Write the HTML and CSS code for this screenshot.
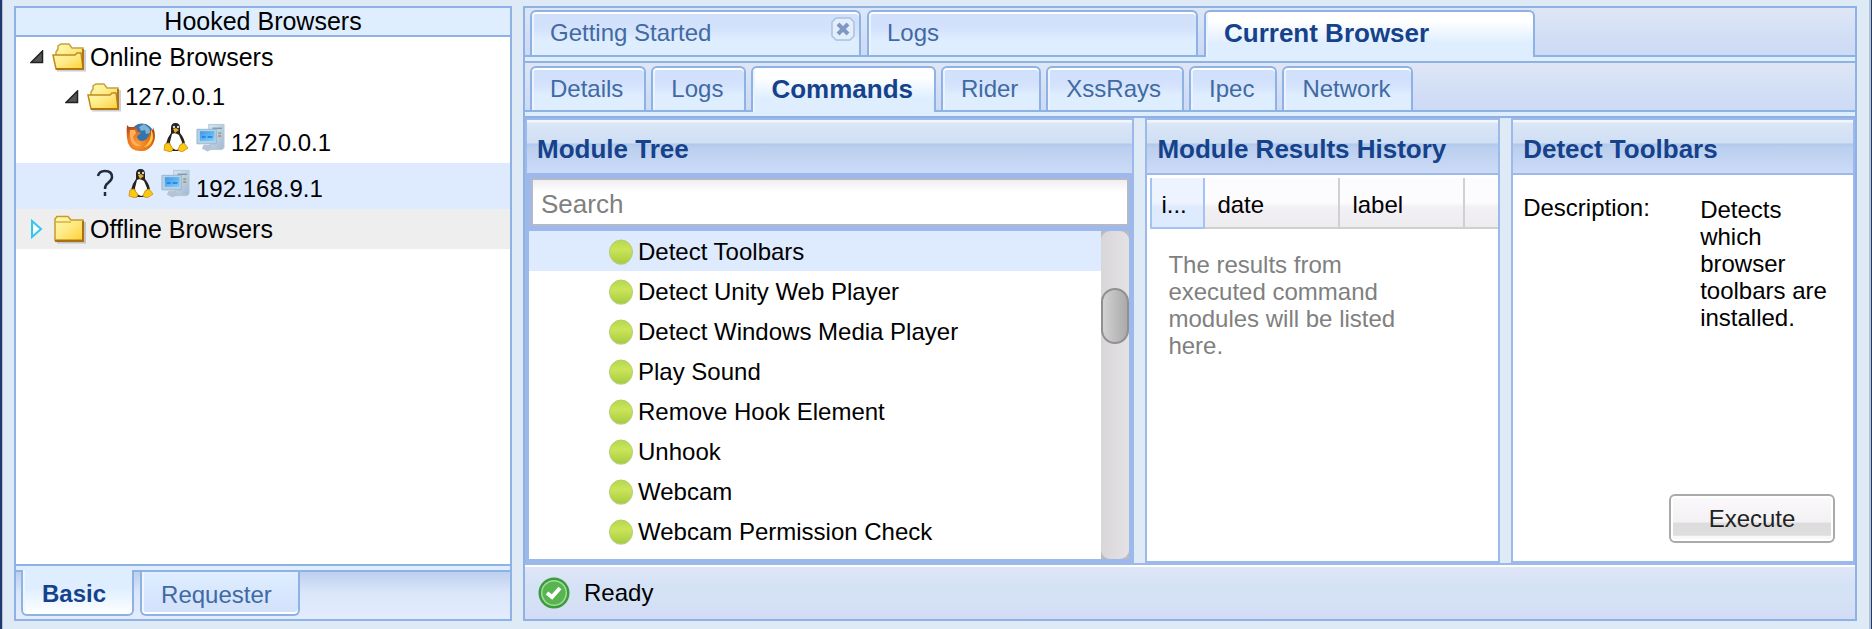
FILE: index.html
```html
<!DOCTYPE html>
<html lang="en">
<head>
<meta charset="utf-8">
<title>Control Panel</title>
<link rel="stylesheet" href="styles.css">
</head>
<body>
<svg class="sprites" width="0" height="0" aria-hidden="true">
  <defs>
    <linearGradient id="gold" x1="0" y1="0" x2="1" y2="1"><stop offset="0" stop-color="#fffbb0"/><stop offset=".5" stop-color="#ffe985"/><stop offset="1" stop-color="#ffcf30"/></linearGradient>
    <linearGradient id="lime" x1="0" y1="0" x2="0" y2="1"><stop offset="0" stop-color="#b5d84a"/><stop offset=".4" stop-color="#cbe45a"/><stop offset="1" stop-color="#a6cc3c"/></linearGradient>
    <radialGradient id="fox" cx=".4" cy=".7" r=".7"><stop offset="0" stop-color="#f9a030"/><stop offset=".6" stop-color="#e8701c"/><stop offset="1" stop-color="#a8481c"/></radialGradient>
    <linearGradient id="screen" x1="0" y1="0" x2="1" y2="1"><stop offset="0" stop-color="#3c98ec"/><stop offset="1" stop-color="#7cd0fc"/></linearGradient>
    <linearGradient id="tower" x1="0" y1="0" x2="1" y2="1"><stop offset="0" stop-color="#d8e6f0"/><stop offset="1" stop-color="#a0b8d0"/></linearGradient>
    <symbol id="folder-open" viewBox="0 0 34 29">
      <path d="M5 27.500H33V7" fill="none" stroke="#b9b9c4" stroke-width="2" opacity=".7"/>
      <path d="M4 24V9L6 6V3L9 1H17L20 5H31V24Z" fill="url(#gold)" stroke="#c8a040" stroke-width="1.500"/>
      <path d="M1 12H23L25 10H29L31 25L30 26H4Z" fill="url(#gold)" stroke="#c08a1c" stroke-width="1.500"/>
      <path d="M4 26H31V6" fill="none" stroke="#b07810" stroke-width="2"/>
    </symbol>
    <symbol id="folder" viewBox="0 0 34 29">
      <path d="M5 27.500H33V7" fill="none" stroke="#b0b0ba" stroke-width="2" opacity=".7"/>
      <path d="M3 25V4L5 1.500H16L19 5H31V25Z" fill="url(#gold)" stroke="#c39a2c" stroke-width="1.500"/>
      <path d="M4 7H19" stroke="#d8b040" stroke-width="1.500"/>
      <path d="M3 26H31V6" fill="none" stroke="#a87010" stroke-width="2"/>
    </symbol>
    <symbol id="firefox" viewBox="0 0 29 29">
      <circle cx="16" cy="12" r="11.500" fill="#3874ac"/>
      <path d="M13 4L18 1L23 5L25 10L20 11L19 7L15 8Z" fill="#7cb4d4"/>
      <path d="M1 2L3 4L9 4Q12 5 11 8L15 10L11 13Q11 17 15 18Q20 18 22 14Q24 11 24 7Q27 9 27 4Q31 14 27 21Q22 29 14 28Q5 28 2 20Q0 13 1 2Z" fill="url(#fox)"/>
      <path d="M4 7L9 7L10 10L7 14Q8 21 15 22Q10 25 6 20Q3 14 4 7Z" fill="#ffb060"/>
      <path d="M25 6Q29 14 25 20Q22 24 18 24Q26 18 25 6Z" fill="#ffc93c"/>
    </symbol>
    <symbol id="tux" viewBox="0 0 25 29">
      <path d="M8 5Q8 0 12.500 0Q17 0 17 5V10Q22 16 22 22L17 28H8L3 21Q4 15 8 10Z" fill="#25221f"/>
      <path d="M9 11Q12 9 16 12L19 19Q19 26 13 27Q7 25 7 19Z" fill="#fff"/>
      <path d="M10 6L13 5L16 7L12 10Z" fill="#e8b020"/>
      <circle cx="11" cy="4" r="1.200" fill="#ddd"/><circle cx="15" cy="4" r="1.200" fill="#ddd"/>
      <path d="M2 21L6 20L10 26L8 29L1 27ZM17 22L21 20L25 25L19 29L15 27Z" fill="#fbc816" stroke="#d89c10"/>
    </symbol>
    <symbol id="computer" viewBox="0 0 30 29">
      <path d="M13 1H29V25L27 27H15Z" fill="url(#tower)" stroke="#b4c8d8"/>
      <path d="M17 5H27" stroke="#8098b0" stroke-width="1.500"/>
      <path d="M23 10H26" stroke="#70bc70" stroke-width="2"/><path d="M23 13H26" stroke="#d88080" stroke-width="2"/>
      <path d="M1 6H21V21H1Z" fill="#b8d0e4" stroke="#98b4cc"/>
      <path d="M4 8H19V18H4Z" fill="url(#screen)"/>
      <path d="M6 14H10M12 14H17" stroke="#2478d0" stroke-width="1.500"/>
      <path d="M8 22H15L18 26L12 29L6 26Z" fill="#b4c4d4"/>
    </symbol>
    <symbol id="dot" viewBox="0 0 26 26">
      <ellipse cx="13" cy="14" rx="11" ry="12" fill="#7c9a50" opacity=".25"/>
      <ellipse cx="13" cy="13" rx="11.500" ry="12" fill="url(#lime)" stroke="#b5cc78"/>
    </symbol>
  </defs>
</svg>

<div class="viewport">
  <aside class="browsers">
    <h1 class="browsers-title">Hooked Browsers</h1>
    <ul class="tree">
      <li class="node group">
        <svg class="arrow" viewBox="0 0 14 14"><path d="M1 12.500L12.500 1V12.500Z" fill="#555" stroke="#222" stroke-width="1.500"/></svg>
        <svg class="folder"><use href="#folder-open"/></svg><span>Online Browsers</span>
      </li>
      <li class="node node-child">
        <svg class="arrow" viewBox="0 0 14 14"><path d="M1 12.500L12.500 1V12.500Z" fill="#555" stroke="#222" stroke-width="1.500"/></svg>
        <svg class="folder"><use href="#folder-open"/></svg><span>127.0.0.1</span>
      </li>
      <li class="node host host-child">
        <svg class="badge"><use href="#firefox"/></svg>
        <svg class="badge"><use href="#tux"/></svg>
        <svg class="badge"><use href="#computer"/></svg><span>127.0.0.1</span>
      </li>
      <li class="node host selected">
        <svg class="badge" viewBox="0 0 29 29"><path d="M7 7Q8 2 14 2Q21 2 21 8Q21 11 17 14Q14 16 14 20M14 23V27" fill="none" stroke="#222b3c" stroke-width="2.500"/></svg>
        <svg class="badge"><use href="#tux"/></svg>
        <svg class="badge"><use href="#computer"/></svg><span>192.168.9.1</span>
      </li>
      <li class="node group hovered">
        <svg class="arrow arrow-closed" viewBox="0 0 14 20"><path d="M2 2L11 10L2 18Z" fill="#fff" stroke="#30c8f0" stroke-width="2"/></svg>
        <svg class="folder"><use href="#folder"/></svg><span>Offline Browsers</span>
      </li>
    </ul>
    <div class="strip-line"></div>
    <nav class="bottom-tabs">
      <button class="bottom-tab active">Basic</button>
      <button class="bottom-tab">Requester</button>
    </nav>
  </aside>

  <main class="workspace">
    <nav class="tabs tabs-main">
      <div class="tab wide">
        <button class="tab-label">Getting Started</button>
        <button class="tab-close" aria-label="Close"><svg viewBox="0 0 24 24"><path d="M5 1H19L23 5V19L19 23H5L1 19V5Z" fill="#e4eefb" stroke="#a9c0e6" stroke-width="1.500"/><path d="M7 7L17 17M17 7L7 17" stroke="#8098c4" stroke-width="4"/></svg></button>
      </div>
      <button class="tab wide">Logs</button>
      <button class="tab wide active">Current Browser</button>
    </nav>
    <div class="strip-line"></div>
    <nav class="tabs">
      <button class="tab">Details</button>
      <button class="tab">Logs</button>
      <button class="tab active">Commands</button>
      <button class="tab">Rider</button>
      <button class="tab">XssRays</button>
      <button class="tab">Ipec</button>
      <button class="tab">Network</button>
    </nav>
    <div class="strip-line"></div>

    <div class="panels">
      <section class="panel modules">
        <h2 class="panel-title">Module Tree</h2>
        <div class="search-bar"><input class="search" type="text" placeholder="Search" aria-label="Search"></div>
        <div class="module-box">
          <ul class="module-list">
            <li class="module selected"><svg class="dot"><use href="#dot"/></svg>Detect Toolbars</li>
            <li class="module"><svg class="dot"><use href="#dot"/></svg>Detect Unity Web Player</li>
            <li class="module"><svg class="dot"><use href="#dot"/></svg>Detect Windows Media Player</li>
            <li class="module"><svg class="dot"><use href="#dot"/></svg>Play Sound</li>
            <li class="module"><svg class="dot"><use href="#dot"/></svg>Remove Hook Element</li>
            <li class="module"><svg class="dot"><use href="#dot"/></svg>Unhook</li>
            <li class="module"><svg class="dot"><use href="#dot"/></svg>Webcam</li>
            <li class="module"><svg class="dot"><use href="#dot"/></svg>Webcam Permission Check</li>
          </ul>
          <div class="scrollbar"><div class="track"><div class="thumb"></div></div></div>
        </div>
      </section>

      <section class="panel results">
        <h2 class="panel-title">Module Results History</h2>
        <table class="grid">
          <thead><tr><th class="col-id">i...</th><th class="col-date">date</th><th class="col-label">label</th><th></th></tr></thead>
        </table>
        <p class="empty">The results from executed command modules will be listed here.</p>
      </section>

      <section class="panel details">
        <h2 class="panel-title">Detect Toolbars</h2>
        <dl class="fields">
          <dt>Description:</dt>
          <dd>Detects which browser toolbars are installed.</dd>
        </dl>
        <button class="execute">Execute</button>
      </section>
    </div>

    <footer class="status">
      <svg class="status-icon" viewBox="0 0 32 32"><circle cx="16" cy="16" r="15.500" fill="#3c9c3c"/><circle cx="16" cy="16" r="13" fill="#a4dc9c"/><circle cx="16" cy="16" r="11.500" fill="#58b450"/><path d="M9 16L14 20L22 11" fill="none" stroke="#fff" stroke-width="4"/></svg>
      <span>Ready</span>
    </footer>
  </main>
</div>
</body>
</html>
```
FILE: styles.css
```css
* { box-sizing: border-box; }

:root {
  --line: #8db2e3;
  --frame: #9db9ec;
  --page: #deeaf6;
  --pale: #deeafd;
  --ink: #15428b;
}

body {
  margin: 0;
  background: var(--page);
  color: #000;
  font: 24px/28px "Liberation Sans", Arial, sans-serif;
}

button { font: inherit; margin: 0; cursor: pointer; }
ul, dl, dd, h1, h2, p { margin: 0; padding: 0; }
ul { list-style: none; }
svg { flex: none; display: block; }
.sprites { position: absolute; }

.viewport {
  display: grid;
  grid-template-columns: minmax(0, 498fr) minmax(0, 1334fr);
  gap: 11px;
  min-height: 100vh;
  padding: 6px 14px 8px 12px;
  border: solid #1e3a70;
  border-width: 0 1px 0 2px;
  box-shadow: inset 1px 0 #b4c2d0, inset -2px 0 #b4c2d0;
}

.browsers, .workspace {
  display: flex;
  flex-direction: column;
  border: 2px solid var(--line);
}

.browsers-title {
  height: 29px;
  border-bottom: 2px solid var(--line);
  background: #deeeff;
  font-size: 25px;
  font-weight: normal;
  line-height: 27px;
  text-align: center;
}

.tree { flex: 1; background: #fff; }
.node {
  display: flex;
  align-items: center;
  height: 40px;
  padding-left: 14px;
}
.group { font-size: 25px; }
.node-child { padding-left: 49px; }
.arrow { width: 14px; height: 14px; margin-right: 8px; }
.arrow-closed { height: 20px; }
.folder { width: 34px; height: 29px; margin-right: 4px; }
.host {
  align-items: flex-end;
  gap: 6px;
  height: 46px;
  padding: 0 0 8px 75px;
}
.host span { line-height: 24px; }
.host-child { padding-left: 110px; }
.badge { width: 29px; height: 29px; margin-bottom: 3px; }
.selected { background: var(--pale); }
.hovered { background: #eee; }

.strip-line {
  height: 8px;
  flex: none;
  border: solid var(--line);
  border-width: 2px 0;
  background: #deeeff;
}

.bottom-tabs {
  display: flex;
  align-items: flex-start;
  gap: 6px;
  height: 47px;
  padding-left: 5px;
  background: linear-gradient(#bdd0ef, #dbe6fa 45%, #e4edff);
}
.bottom-tab {
  height: 44px;
  padding: 3px 26px 0 19px;
  border: 2px solid var(--line);
  border-top: 0;
  border-radius: 0 0 6px 6px;
  background: linear-gradient(#deeeff, #d2e0fb);
  box-shadow: inset 0 -2px #fff, inset 2px 0 #f0f6ff;
  color: #416aa3;
}
.bottom-tab.active {
  z-index: 1;
  height: 46px;
  margin-top: -2px;
  background: linear-gradient(#deeeff 40%, #fff);
  color: var(--ink);
  font-weight: bold;
}

.tabs {
  display: flex;
  align-items: flex-end;
  gap: 5px;
  height: 47px;
  flex: none;
  padding-left: 5px;
  background: linear-gradient(#dfe6f6, #d5e2f5 40%, #d2dcf6 70%, #ccdbf4);
}
.tabs-main { gap: 6px; }
.tab {
  display: flex;
  align-items: center;
  height: 44px;
  padding: 0 21px 1px 18px;
  border: 2px solid var(--line);
  border-bottom: 0;
  border-radius: 6px 6px 0 0;
  background: linear-gradient(#d0e0fb, #d4e2fc 40%, #deeeff 65%);
  box-shadow: inset 0 2px #fff, inset 2px 0 #eaf3ff;
  color: #416aa3;
}
.wide { flex: 0 1 331px; }
.tabs-main .tab { height: 45px; }
.tab.active, .tabs-main .tab.active {
  z-index: 1;
  height: 46px;
  margin-bottom: -2px;
  padding-bottom: 3px;
  background: linear-gradient(#fff 20%, #deeeff 70%);
  color: var(--ink);
  font-size: 26px;
  font-weight: bold;
}
.tabs-main .tab.active { height: 47px; }
.tab-label {
  flex: 1;
  padding: 0;
  border: 0;
  background: none;
  color: inherit;
  text-align: left;
  white-space: nowrap;
}
.tab-close {
  align-self: flex-start;
  width: 24px;
  height: 24px;
  margin: 5px -17px 0 0;
  padding: 0;
  border: 0;
  background: none;
}

.panels {
  display: flex;
  gap: 11px;
  flex: 1;
  min-height: 0;
  border-bottom: 2px solid var(--frame);
  background: var(--page);
}
.panel {
  display: flex;
  flex-direction: column;
  min-width: 0;
  border: 2px solid var(--frame);
  background: #fff;
}
.modules { flex: 611 1 0; }
.results { flex: 354 1 0; }
.details { flex: 343 1 0; }
.panel-title {
  flex: none;
  height: 55px;
  padding: 15px 10px 0;
  border-bottom: 2px solid var(--frame);
  background: linear-gradient(#f2f7fd 2px, #dbe6f6 3px, #d0dff4 23px, #b0c8ec 24px, #bacfee 27px, #ccdbf7);
  color: var(--ink);
  font-size: 26px;
  line-height: 28px;
  white-space: nowrap;
}

.search-bar {
  display: flex;
  padding: 3px 3px 5px 4px;
  background: var(--frame);
}
.search {
  flex: 1;
  min-width: 0;
  height: 48px;
  padding: 4px 8px 0;
  border: 2px solid #b5b8c8;
  background: linear-gradient(#eee, #fff 12px);
  font: 26px "Liberation Sans", Arial, sans-serif;
}
.search::placeholder { color: #808080; opacity: 1; }

.module-box {
  display: flex;
  flex: 1;
  min-height: 0;
  border: solid var(--frame);
  border-width: 0 3px 2px 2px;
}
.module-list { flex: 1; min-width: 0; overflow: hidden; }
.module {
  display: flex;
  align-items: center;
  height: 40px;
  padding: 1px 0 0 79px;
  white-space: nowrap;
}
.dot { width: 26px; height: 26px; margin-right: 4px; }
.scrollbar { width: 28px; background: #bbb; }
.track {
  height: 100%;
  padding-top: 57px;
  border-radius: 9px;
  background: linear-gradient(90deg, #d8d6d8, #e4e2e4);
}
.thumb {
  height: 56px;
  border: 2px solid #909090;
  border-radius: 14px;
  background: linear-gradient(90deg, #d2d2d2, #aaa);
}

.grid {
  width: calc(100% - 3px);
  margin: 3px 0 0 3px;
  border-spacing: 0;
  table-layout: fixed;
}
.grid th {
  height: 51px;
  padding: 4px 10px 0 12px;
  border: solid #d0d0d0;
  border-width: 0 2px 2px 0;
  background: linear-gradient(#fcfbfd 50%, #f3f0f5 60%, #ececee);
  font-weight: normal;
  text-align: left;
}
.grid th:last-child { border-right: 0; }
.grid .col-id {
  width: 55px;
  padding: 4px 0 0 9px;
  border: solid #a3c3f0;
  border-width: 0 2px 2px;
  background: linear-gradient(#edf4ff 50%, #deeafd 60%);
}
.col-date { width: 135px; }
.col-label { width: 125px; }
.empty {
  padding: 22px 90px 0 21px;
  color: #808080;
  line-height: 27px;
}

.fields {
  display: flex;
  flex: 1;
  padding: 19px 16px 0 10px;
  line-height: 27px;
}
.fields dt { flex: 0 0 177px; }
.fields dd { padding-top: 2px; }
.execute {
  align-self: flex-end;
  width: 166px;
  height: 49px;
  margin: 0 18px 18px 0;
  padding: 0;
  border: 2px solid #aaa;
  border-radius: 6px;
  background: linear-gradient(#fbf9fb, #f4f1f4 58%, #dcdcdc 60%, #dedede 87%, #f8f8f8 90%);
  box-shadow: inset 0 0 0 2px #fff;
  color: #222;
}

.status {
  display: flex;
  align-items: center;
  gap: 14px;
  flex: none;
  height: 54px;
  padding-left: 13px;
  border-top: 2px solid #fff;
  background: linear-gradient(#dfe6f7, #d5e2f5 35%, #d5e1f5 65%, #d3dcf6);
}
.status-icon { width: 32px; height: 32px; }
```
